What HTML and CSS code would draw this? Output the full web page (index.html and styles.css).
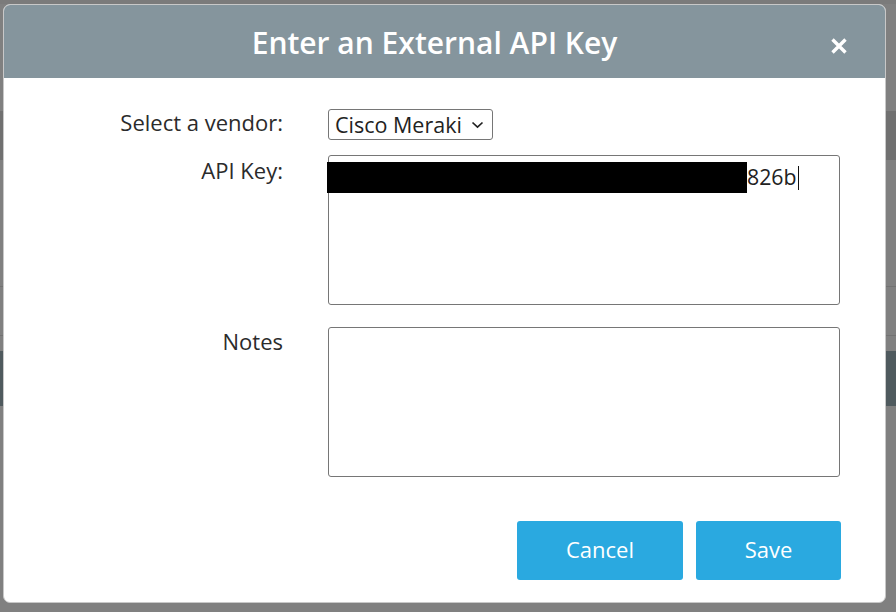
FILE: index.html
```html
<!DOCTYPE html>
<html>
<head>
<meta charset="utf-8">
<link rel="stylesheet" href="styles.css">
</head>
<body>
<div class="backdrop">
  <div class="bg-top"></div>
  <div class="bg-gap1"></div>
  <div class="bg-band"></div>
  <div class="bg-gap2"></div>
  <div class="bg-line"></div>
  <div class="bg-gap3"></div>
  <div class="bg-line"></div>
  <div class="bg-gap4"></div>
  <div class="bg-dark"></div>
</div>
<div class="modal">
  <div class="modal-header">
    <h1 class="modal-title">Enter an External API Key</h1>
    <svg class="modal-close" width="16" height="16" viewBox="0 0 16 16"><path d="M1.5 1.5 L14.5 14.5 M14.5 1.5 L1.5 14.5" stroke="#fff" stroke-width="3.4" stroke-linecap="butt"/></svg>
  </div>
  <div class="modal-body">
    <div class="form-row row-vendor">
      <label class="form-label">Select a vendor:</label>
      <div class="select-box">Cisco Meraki
        <svg class="chev" width="13" height="8" viewBox="0 0 13 8"><path d="M1.5 1.5 L6.5 6.2 L11.5 1.5" fill="none" stroke="#222" stroke-width="1.7"/></svg>
      </div>
    </div>
    <div class="form-row row-key">
      <label class="form-label">API Key:</label>
      <div class="textarea">
        <div class="key-line"><span class="redact"></span><span class="key-text">826b</span><span class="caret"></span></div>
      </div>
    </div>
    <div class="form-row row-notes">
      <label class="form-label">Notes</label>
      <div class="textarea"></div>
    </div>
    <div class="actions">
      <button class="btn btn-cancel">Cancel</button>
      <button class="btn btn-save">Save</button>
    </div>
  </div>
</div>
</body>
</html>
```
FILE: styles.css
```css
html, body {
  margin: 0;
  padding: 0;
  width: 896px;
  height: 612px;
  overflow: hidden;
  font-family: "Open Sans", "Noto Sans", sans-serif;
}
.backdrop {
  width: 896px;
  height: 612px;
  background: #808080;
}
.bg-top { height: 4px; background: #7b7b7b; }
.bg-gap1 { height: 107px; }
.bg-band { height: 49px; background: #707070; }
.bg-gap2 { height: 126px; }
.bg-line { height: 1px; background: #727272; }
.bg-gap3 { height: 48px; }
.bg-gap4 { height: 15px; }
.bg-dark { height: 55px; background: #4f5a5e; }

.modal {
  position: absolute;
  left: 3px;
  top: 4px;
  width: 881px;
  height: 597px;
  background: #fff;
  border: 1px solid #c8c8c8;
  border-radius: 7px;
  overflow: hidden;
  box-sizing: content-box;
}
.modal-header {
  height: 73px;
  background: #85959d;
  display: flex;
  align-items: center;
  justify-content: center;
  position: relative;
}
.modal-title {
  margin: 0;
  color: #fff;
  font-size: 30px;
  font-weight: 600;
  letter-spacing: 0;
  padding-right: 20px;
  padding-top: 1px;
}
.modal-close {
  position: absolute;
  right: 38px;
  top: 33px;
}
.modal-body {
  padding: 31px 0 0 0;
}
.form-row {
  display: flex;
}
.form-label {
  width: 279px;
  text-align: right;
  font-size: 22px;
  color: #2b2b2b;
  margin-right: 45px;
  line-height: 28px;
}
.row-vendor .form-label { margin-top: -1px; }
.select-box {
  height: 29px;
  border: 1px solid #767676;
  border-radius: 3px;
  font-size: 21.5px;
  color: #222;
  display: flex;
  align-items: center;
  padding: 0 8px 0 6px;
  gap: 9px;
  line-height: 27px;
}
.row-key { margin-top: 15px; }
.row-key .form-label { padding-top: 1px; }
.textarea {
  width: 510px;
  height: 148px;
  border: 1px solid #767676;
  border-radius: 3px;
}
.key-line {
  display: flex;
  align-items: center;
  margin-top: 6px;
  margin-left: -2px;
  height: 31px;
}
.redact {
  width: 420px;
  height: 31px;
  background: #000;
}
.key-text {
  font-size: 21.3px;
  color: #222;
  margin-left: 0;
  margin-top: -2px;
}
.caret {
  width: 1px;
  height: 24px;
  background: #111;
  margin-left: 1px;
}
.row-notes { margin-top: 22px; }
.row-notes .form-label { padding-top: 0; }
.actions {
  display: flex;
  justify-content: flex-end;
  gap: 13px;
  margin-top: 44px;
  padding-right: 44px;
}
.btn {
  height: 59px;
  border: none;
  border-radius: 3px;
  background: #2aa9e0;
  color: #fff;
  font-family: "Open Sans", "Noto Sans", sans-serif;
  font-size: 22px;
  padding: 0 0 3px 0;
}
.btn-cancel { width: 166px; }
.btn-save { width: 145px; }
```
